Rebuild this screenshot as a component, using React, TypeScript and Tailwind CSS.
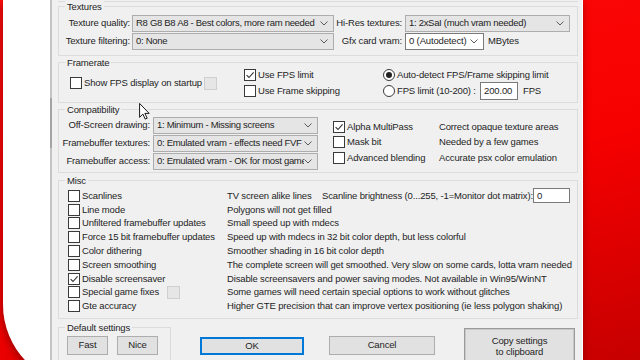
import type { ReactNode } from "react";

function Check({ checked }: { checked?: boolean }) {
  return (
    <span className="flex h-[12px] w-[12px] shrink-0 items-center justify-center border border-[#3a3a3a] bg-white">
      {checked && (
        <svg viewBox="0 0 10 10" className="h-[10px] w-[10px]">
          <path d="M1.6 5.1 L4 7.5 L8.6 2.3" fill="none" stroke="#333" strokeWidth="1.1" />
        </svg>
      )}
    </span>
  );
}

function Radio({ on }: { on?: boolean }) {
  return (
    <span className="flex h-[12px] w-[12px] shrink-0 items-center justify-center rounded-full border border-[#3a3a3a] bg-white">
      {on && <span className="h-[6px] w-[6px] rounded-full bg-[#222]" />}
    </span>
  );
}

function Chevron() {
  return (
    <svg viewBox="0 0 8 5" className="ml-auto mr-[5px] h-[5px] w-[8px] shrink-0">
      <polyline points="0.5,0.5 4,4 7.5,0.5" fill="none" stroke="#5a5a5a" strokeWidth="1" />
    </svg>
  );
}

function Combo({ text, className }: { text: string; className: string }) {
  return (
    <div className={`flex items-center overflow-hidden whitespace-nowrap border border-[#adadad] bg-[#e5e5e5] pl-[3px] ${className}`}>
      <span className="min-w-0 overflow-hidden pr-[2px] tracking-[-0.3px]">{text}</span>
      <Chevron />
    </div>
  );
}

function Group({ label, className, children }: { label: string; className: string; children?: ReactNode }) {
  return (
    <div className={`border border-[#dcdcdc] ${className}`}>
      <div className="-mt-[6px] ml-[6px] h-[12px] w-fit bg-[#f0f0f0] px-[2px] leading-[12px]">{label}</div>
      {children}
    </div>
  );
}

function Disabled() {
  return <span className="h-[13px] w-[13px] shrink-0 border border-[#cfcfcf] bg-[#e6e6e6]" />;
}

const miscRows = [
  { label: "Scanlines", desc: "TV screen alike lines", extra: "scan" },
  { label: "Line mode", desc: "Polygons will not get filled" },
  { label: "Unfiltered framebuffer updates", desc: "Small speed up with mdecs" },
  { label: "Force 15 bit framebuffer updates", desc: "Speed up with mdecs in 32 bit color depth, but less colorful" },
  { label: "Color dithering", desc: "Smoother shading in 16 bit color depth" },
  { label: "Screen smoothing", desc: "The complete screen will get smoothed. Very slow on some cards, lotta vram needed" },
  { label: "Disable screensaver", desc: "Disable screensavers and power saving modes. Not available in Win95/WinNT", checked: true },
  { label: "Special game fixes", desc: "Some games will need certain special options to work without glitches", extra: "box" },
  { label: "Gte accuracy", desc: "Higher GTE precision that can improve vertex positioning (ie less polygon shaking)" },
];

const compatRows = [
  { label: "Alpha MultiPass", desc: "Correct opaque texture areas", checked: true },
  { label: "Mask bit", desc: "Needed by a few games" },
  { label: "Advanced blending", desc: "Accurate psx color emulation" },
];

export default function App() {
  return (
    <div className="relative h-[360px] w-[640px] overflow-hidden bg-[linear-gradient(165deg,#ff0c0c_0%,#f70000_55%,#c60000_100%)]">
      <div className="ml-[3px] h-[385px] w-[580px] rounded-bl-[80px] bg-white pl-[47px] shadow-[-1px_3px_8px_rgba(90,0,0,0.55)]">
        <div className="flex h-[360px] w-[532px] bg-[#f0f0f0] font-['Liberation_Sans',Arial,sans-serif] text-[9.5px] tracking-[-0.15px] text-[#1e1e1e]">
          <div className="w-[2px] shrink-0 bg-[#c4c4c4]">
            <div className="mt-[98px] h-[50px] bg-[#a4a4a4]" />
          </div>
          <div className="ml-[6px] w-[520px]">
            <div className="h-[2px] border-b border-[#dcdcdc]" />

            <Group label="Textures" className="mt-[4px] h-[50px]">
              <div className="mt-[2px] flex h-[17px] items-center">
                <span className="w-[71px] text-right">Texture quality:</span>
                <Combo text="R8 G8 B8 A8 - Best colors, more ram needed" className="ml-[2px] h-[17px] w-[202px]" />
                <span className="w-[68px] text-right">Hi-Res textures:</span>
                <Combo text="1: 2xSaI (much vram needed)" className="ml-[3px] h-[17px] w-[165px]" />
              </div>
              <div className="mt-[1px] flex h-[17px] items-center">
                <span className="w-[71px] text-right">Texture filtering:</span>
                <Combo text="0: None" className="ml-[2px] h-[17px] w-[202px]" />
                <span className="w-[68px] text-right">Gfx card vram:</span>
                <div className="ml-[3px] flex h-[17px] w-[79px] items-center border border-[#7a7a7a] bg-white pl-[3px]">
                  <span>0 (Autodetect)</span>
                  <Chevron />
                </div>
                <span className="ml-[4px]">MBytes</span>
              </div>
            </Group>

            <Group label="Framerate" className="mt-[6px] h-[41px]">
              <div className="-mt-[2px] flex h-[32px]">
                <div className="flex w-[185px] items-center">
                  <span className="ml-[11px]">
                    <Check />
                  </span>
                  <span className="ml-[2px] w-[120px] whitespace-nowrap">Show FPS display on startup</span>
                  <Disabled />
                </div>
                <div className="w-[139px]">
                  <div className="flex h-[16px] items-center">
                    <Check checked />
                    <span className="ml-[2px]">Use FPS limit</span>
                  </div>
                  <div className="flex h-[16px] items-center">
                    <Check />
                    <span className="ml-[2px]">Use Frame skipping</span>
                  </div>
                </div>
                <div>
                  <div className="flex h-[16px] items-center">
                    <Radio on />
                    <span className="ml-[2px] whitespace-nowrap">Auto-detect FPS/Frame skipping limit</span>
                  </div>
                  <div className="flex h-[16px] items-center">
                    <Radio />
                    <span className="ml-[2px] w-[83px] whitespace-nowrap">FPS limit (10-200) :</span>
                    <div className="flex h-[18px] w-[38px] items-center border border-[#7a7a7a] bg-white pl-[3px]">200.00</div>
                    <span className="ml-[5px]">FPS</span>
                  </div>
                </div>
              </div>
            </Group>

            <Group label="Compatibility" className="mt-[6px] h-[64px]">
              <div className="flex">
                <div>
                  {[
                    ["Off-Screen drawing:", "1: Minimum - Missing screens"],
                    ["Framebuffer textures:", "0: Emulated vram - effects need FVF"],
                    ["Framebuffer access:", "0: Emulated vram - OK for most games"],
                  ].map(([label, value]) => (
                    <div key={label} className="mt-[1px] flex h-[17px] items-center">
                      <span className="w-[91px] whitespace-nowrap text-right">{label}</span>
                      <Combo text={value} className="ml-[3px] h-[17px] w-[165px]" />
                    </div>
                  ))}
                </div>
                <div className="ml-[15px] pt-[3px]">
                  {compatRows.map((row) => (
                    <div key={row.label} className="flex h-[15.5px] items-center">
                      <Check checked={row.checked} />
                      <span className="ml-[2px] w-[92px] whitespace-nowrap">{row.label}</span>
                      <span className="whitespace-nowrap">{row.desc}</span>
                    </div>
                  ))}
                </div>
              </div>
            </Group>

            <Group label="Misc" className="mt-[7px] h-[139px]">
              <div className="mt-[2px]">
                {miscRows.map((row) => (
                  <div key={row.label} className="flex h-[13.8px] items-center whitespace-nowrap">
                    <span className="ml-[9px]">
                      <Check checked={row.checked} />
                    </span>
                    <span className="ml-[2px] flex w-[145px] items-center">
                      {row.extra === "box" ? (
                        <>
                          <span className="w-[85px]">{row.label}</span>
                          <Disabled />
                        </>
                      ) : (
                        row.label
                      )}
                    </span>
                    {row.extra === "scan" ? (
                      <>
                        <span className="w-[95px]">{row.desc}</span>
                        <span className="w-[209px]">Scanline brightness (0...255, -1=Monitor dot matrix):</span>
                        <div className="ml-[2px] flex h-[15px] w-[37px] items-center border border-[#7a7a7a] bg-white pl-[3px]">0</div>
                      </>
                    ) : (
                      <span>{row.desc}</span>
                    )}
                  </div>
                ))}
              </div>
            </Group>

            <div className="flex items-start">
              <Group label="Default settings" className="mt-[8px] h-[50px] w-[113px]">
                <div className="mt-[2px] flex">
                  <button className="ml-[8px] h-[19px] w-[41px] border border-[#adadad] bg-[#e1e1e1]">Fast</button>
                  <button className="ml-[9px] h-[19px] w-[41px] border border-[#adadad] bg-[#e1e1e1]">Nice</button>
                </div>
              </Group>
              <button className="ml-[29px] mt-[18px] h-[18px] w-[104px] border border-[#0078d7] bg-[#e1e1e1] shadow-[inset_0_0_0_1px_#0078d7]">
                OK
              </button>
              <button className="ml-[25px] mt-[17px] h-[19px] w-[106px] border border-[#adadad] bg-[#e1e1e1]">Cancel</button>
              <button className="ml-[29px] mt-[9px] h-[42px] w-[111px] border border-[#9a9a9a] bg-[#e1e1e1] pb-[6px] leading-[11px] shadow-[inset_0_0_0_1px_#c8c8c8]">
                Copy settings
                <br />
                to clipboard
              </button>
            </div>
          </div>
        </div>
      </div>
      <svg viewBox="0 0 12 19" className="absolute left-[139px] top-[103px] h-[17px] w-[11px]">
        <path d="M0.5 0.5 L0.5 16 L4.2 12.4 L6.8 18 L9 17 L6.4 11.6 L11.2 11.6 Z" fill="#fff" stroke="#000" strokeWidth="1" strokeLinejoin="round" />
      </svg>
    </div>
  );
}
